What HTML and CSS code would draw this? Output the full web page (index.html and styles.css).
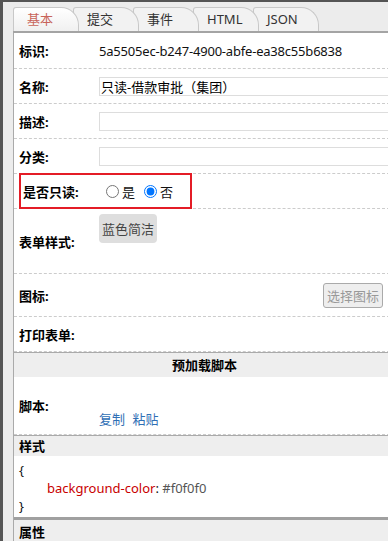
FILE: index.html
```html
<!DOCTYPE html>
<html lang="zh-CN">
<head>
    <meta charset="UTF-8">
    <meta name="viewport" content="width=device-width, initial-scale=1.0">
    <title>表单属性</title>
    <link rel="stylesheet" href="styles.css">
</head>
<body>
    <div class="wrap">
        <div class="tabs">
            <div class="tab active">基本</div>
            <div class="tab">提交</div>
            <div class="tab">事件</div>
            <div class="tab">HTML</div>
            <div class="tab">JSON</div>
        </div>

        <div class="panel">
            <div class="row first">
                <div class="label">标识:</div>
                <div class="value">5a5505ec-b247-4900-abfe-ea38c55b6838</div>
            </div>
            <div class="row">
                <div class="label">名称:</div>
                <input class="field" type="text" value="只读-借款审批（集团）">
            </div>
            <div class="row">
                <div class="label">描述:</div>
                <input class="field" type="text">
            </div>
            <div class="row">
                <div class="label">分类:</div>
                <input class="field" type="text">
            </div>
            <div class="row">
                <div class="highlight">
                    <div class="label narrow">是否只读:</div>
                    <label><input type="radio" name="readonly">是</label>
                    <label><input type="radio" name="readonly" checked>否</label>
                </div>
            </div>
            <div class="row tall">
                <div class="label">表单样式:</div>
                <div class="value top">
                    <button class="style-btn">蓝色简洁</button>
                </div>
            </div>
            <div class="row icon-row">
                <div class="label">图标:</div>
                <div class="value right">
                    <button class="pick-btn">选择图标</button>
                </div>
            </div>
            <div class="row">
                <div class="label">打印表单:</div>
            </div>

            <div class="section center">预加载脚本</div>
            <div class="row script-row">
                <div class="label">脚本:</div>
                <div class="value links">
                    <a href="#">复制</a>
                    <a href="#">粘贴</a>
                </div>
            </div>

            <div class="section small">样式</div>
            <div class="code">
                <div>{</div>
                <div class="indent"><span class="prop">background-color</span>: <span class="val">#f0f0f0</span></div>
                <div>}</div>
            </div>

            <div class="section last">属性</div>
        </div>
    </div>
</body>
</html>
```

FILE: styles.css
```css
body {
    margin: 0;
    height: 541px;
    overflow: hidden;
    box-sizing: border-box;
    border-top: 2px solid #555;
    border-left: 3px solid #555;
    background: #ececec;
    font-family: "Noto Sans", "Noto Sans CJK SC", sans-serif;
    font-size: 13px;
    color: #111;
}
.wrap {
    padding-left: 10px;
}
.tabs {
    display: flex;
    padding-top: 5px;
    border-bottom: 2px solid #a4a4a4;
}
.tab {
    position: relative;
    width: 66px;
    height: 24px;
    box-sizing: border-box;
    margin-right: -6px;
    padding-left: 13px;
    line-height: 23px;
    border: 1px solid #c8c8c8;
    border-bottom: none;
    border-radius: 3px 18px 0 0;
    background: #f2f2f2;
    color: #333;
}
.tab:nth-child(1) { z-index: 5; }
.tab:nth-child(2) { z-index: 4; }
.tab:nth-child(3) { z-index: 3; }
.tab:nth-child(4) { z-index: 2; }
.tab:nth-child(5) { z-index: 1; }
.tab.active {
    background: linear-gradient(#ffffff, #f0f0f0);
    color: #c8645a;
}
.panel {
    width: 376px;
    border-left: 1px solid #aaa;
    background: #fff;
}
.row {
    display: flex;
    align-items: center;
    min-height: 34px;
    padding-left: 5px;
    border-bottom: 1px dashed #ccc;
}
.row.first {
    min-height: 35px;
}
.row.tall {
    min-height: 64px;
}
.row.icon-row {
    min-height: 42px;
}
.row.script-row {
    min-height: 57px;
}
.label {
    width: 80px;
    flex-shrink: 0;
    font-weight: bold;
    color: #000;
}
.label.narrow {
    width: 78px;
}
.value {
    flex: 1;
    letter-spacing: -0.2px;
}
.value.top {
    align-self: flex-start;
    padding-top: 5px;
}
.value.right {
    display: flex;
    justify-content: flex-end;
    padding-right: 7px;
}
.field {
    flex: 1;
    height: 19px;
    box-sizing: border-box;
    margin: 1px 0 0;
    padding: 0 1px;
    border: 1px solid #ddd;
    font: inherit;
    color: #000;
}
.highlight {
    display: flex;
    align-items: center;
    width: 173px;
    height: 36px;
    box-sizing: border-box;
    margin: -1px 0 -1px;
    padding-left: 2px;
    border: 2px solid #e41c26;
}
.highlight label {
    display: flex;
    align-items: center;
    margin-right: 4px;
}
.highlight input {
    width: 13px;
    height: 13px;
    margin: 0 3px 0 5px;
}
.style-btn {
    height: 29px;
    padding: 0 3px;
    border: none;
    border-radius: 4px;
    background: #dedede;
    font: inherit;
    color: #444;
}
.pick-btn {
    height: 25px;
    padding: 0 3px;
    border: 1px solid #aaa;
    border-radius: 3px;
    background: #eee;
    font: inherit;
    color: #999;
}
.section {
    height: 24px;
    line-height: 24px;
    padding-left: 5px;
    border-top: 1px solid #aaa;
    background: #eee;
    font-weight: bold;
    color: #000;
}
.section.center {
    text-align: center;
}
.section.small {
    height: 20px;
    line-height: 21px;
}
.links {
    align-self: flex-start;
    padding-top: 32px;
    letter-spacing: 0;
}
.links a {
    margin-right: 4px;
    color: #2f6fb5;
    text-decoration: none;
}
.code {
    padding: 5px 5px 2px;
    line-height: 18px;
    color: #111;
}
.indent {
    padding-left: 28px;
}
.prop {
    color: #c80000;
}
.val {
    color: #555;
}
.section.last {
    border-top: 3px solid #a0a0a0;
}
```
